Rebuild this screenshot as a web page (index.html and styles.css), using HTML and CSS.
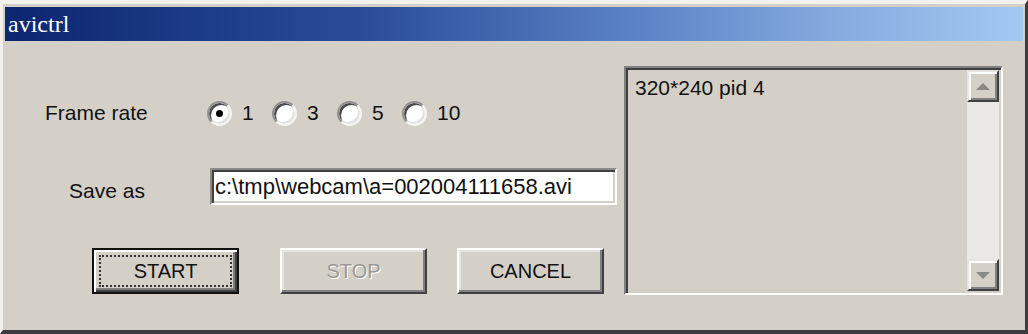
FILE: index.html
```html
<!DOCTYPE html>
<html lang="en">
<head>
    <meta charset="UTF-8">
    <meta name="viewport" content="width=device-width, initial-scale=1.0">
    <title>avictrl</title>
    <link rel="stylesheet" href="styles.css">
</head>
<body>
    <div class="window">
        <div class="titlebar">avictrl</div>
        <div class="content">
            <div class="form">
                <div class="row frame-row">
                    <span class="label frame-label">Frame rate</span>
                    <div class="radios">
                        <label class="radio-item"><span class="radio checked"></span>1</label>
                        <label class="radio-item"><span class="radio"></span>3</label>
                        <label class="radio-item"><span class="radio"></span>5</label>
                        <label class="radio-item"><span class="radio"></span>10</label>
                    </div>
                </div>
                <div class="row save-row">
                    <span class="label save-label">Save as</span>
                    <div class="textbox">c:\tmp\webcam\a=002004111658.avi</div>
                </div>
                <div class="row button-row">
                    <button class="button default start"><span class="focus">START</span></button>
                    <button class="button disabled stop">STOP</button>
                    <button class="button cancel">CANCEL</button>
                </div>
            </div>
            <div class="listbox">
                <div class="list-items">
                    <div class="list-item">320*240 pid 4</div>
                </div>
                <div class="scrollbar">
                    <div class="scroll-btn"><span class="arrow up"></span></div>
                    <div class="scroll-track"></div>
                    <div class="scroll-btn"><span class="arrow down"></span></div>
                </div>
            </div>
        </div>
    </div>
</body>
</html>
```

FILE: styles.css
```css
body {
    margin: 0;
    background-color: #d4d0c8;
    font-family: "Liberation Sans", Arial, sans-serif;
    color: #111;
}
.window {
    width: 1028px;
    height: 334px;
    box-sizing: border-box;
    border-style: solid;
    border-width: 4px 3px 4px 3px;
    border-color: #f2f1ee #3c3c3c #3c3c3c #f2f1ee;
    padding: 3px 2px 0 2px;
    background-color: #d4d0c8;
    overflow: hidden;
}
.titlebar {
    height: 34px;
    line-height: 34px;
    padding-left: 3px;
    background: linear-gradient(90deg, #0c2670 0%, #2a4c98 35%, #5c82c6 62%, #86acdf 82%, #a2c8f2 100%);
    color: #fff;
    font-family: "Liberation Serif", "Times New Roman", serif;
    font-size: 24px;
}
.content {
    display: flex;
    align-items: flex-start;
}
.form {
    width: 619px;
    margin-top: 52px;
}
.row {
    display: flex;
    align-items: center;
}
.label {
    font-size: 21px;
}
.frame-row {
    height: 40px;
}
.frame-label {
    margin-left: 40px;
    width: 162px;
}
.radios {
    display: flex;
    align-items: center;
}
.radio-item {
    display: flex;
    align-items: center;
    gap: 10px;
    width: 65px;
    font-size: 21px;
}
.radio {
    position: relative;
    width: 25px;
    height: 25px;
    box-sizing: border-box;
    border-radius: 50%;
    background: #fff;
    border: 2px solid;
    border-color: #909090 #f4f4f4 #f4f4f4 #909090;
    box-shadow: inset 2px 2px 0 #4a4a4a, inset -2px -2px 0 #e4e2de;
}
.radio.checked::after {
    content: "";
    position: absolute;
    top: 7px;
    left: 7px;
    width: 7px;
    height: 7px;
    border-radius: 50%;
    background: #000;
}
.save-row {
    margin-top: 35px;
    height: 37px;
}
.save-label {
    margin-left: 64px;
    width: 141px;
    padding-top: 9px;
}
.textbox {
    width: 407px;
    height: 37px;
    box-sizing: border-box;
    border: 2px solid;
    border-color: #8a8a8a #fff #fff #8a8a8a;
    box-shadow: inset 2px 2px 0 #404040, inset -2px -2px 0 #d4d0c8;
    background: #fff;
    padding: 2px 0 0 3px;
    font-size: 22px;
    line-height: 29px;
    color: #111;
    white-space: nowrap;
}
.button-row {
    margin-top: 43px;
}
.button {
    height: 46px;
    width: 147px;
    box-sizing: border-box;
    border: 2px solid;
    border-color: #fff #404040 #404040 #fff;
    box-shadow: inset -2px -2px 0 #808080, inset 2px 2px 0 #e6e4e0;
    background: #d4d0c8;
    font-family: "Liberation Sans", Arial, sans-serif;
    font-size: 20px;
    color: #111;
    padding: 0;
}
.start {
    margin-left: 87px;
    border: 2px solid #111;
    box-shadow: inset 2px 2px 0 #fff, inset -2px -2px 0 #404040, inset -4px -4px 0 #808080;
    display: flex;
    padding: 5px;
}
.focus {
    flex: 1;
    display: flex;
    align-items: center;
    justify-content: center;
    border: 2px dotted #333;
}
.stop {
    margin-left: 41px;
}
.disabled {
    color: #9a9894;
    text-shadow: 1px 1px 0 #fff;
}
.cancel {
    margin-left: 30px;
}
.listbox {
    display: flex;
    width: 379px;
    height: 229px;
    margin-top: 25px;
    box-sizing: border-box;
    border: 2px solid;
    border-color: #808080 #fff #fff #808080;
    box-shadow: inset 2px 2px 0 #404040, inset -2px -2px 0 #d4d0c8;
    padding: 2px;
}
.list-items {
    flex: 1;
    padding: 5px 7px;
}
.list-item {
    font-size: 21px;
    line-height: 26px;
}
.scrollbar {
    width: 32px;
    display: flex;
    flex-direction: column;
}
.scroll-track {
    flex: 1;
    background-color: #ebe9e5;
}
.scroll-btn {
    height: 32px;
    box-sizing: border-box;
    border: 2px solid;
    border-color: #e6e4e0 #404040 #404040 #e6e4e0;
    box-shadow: inset 2px 2px 0 #fff, inset -2px -2px 0 #808080;
    background: #d4d0c8;
    display: flex;
    align-items: center;
    justify-content: center;
}
.arrow {
    width: 0;
    height: 0;
    border-left: 7px solid transparent;
    border-right: 7px solid transparent;
}
.arrow.up {
    border-bottom: 7px solid #8a8884;
}
.arrow.down {
    border-top: 7px solid #8a8884;
}
```
